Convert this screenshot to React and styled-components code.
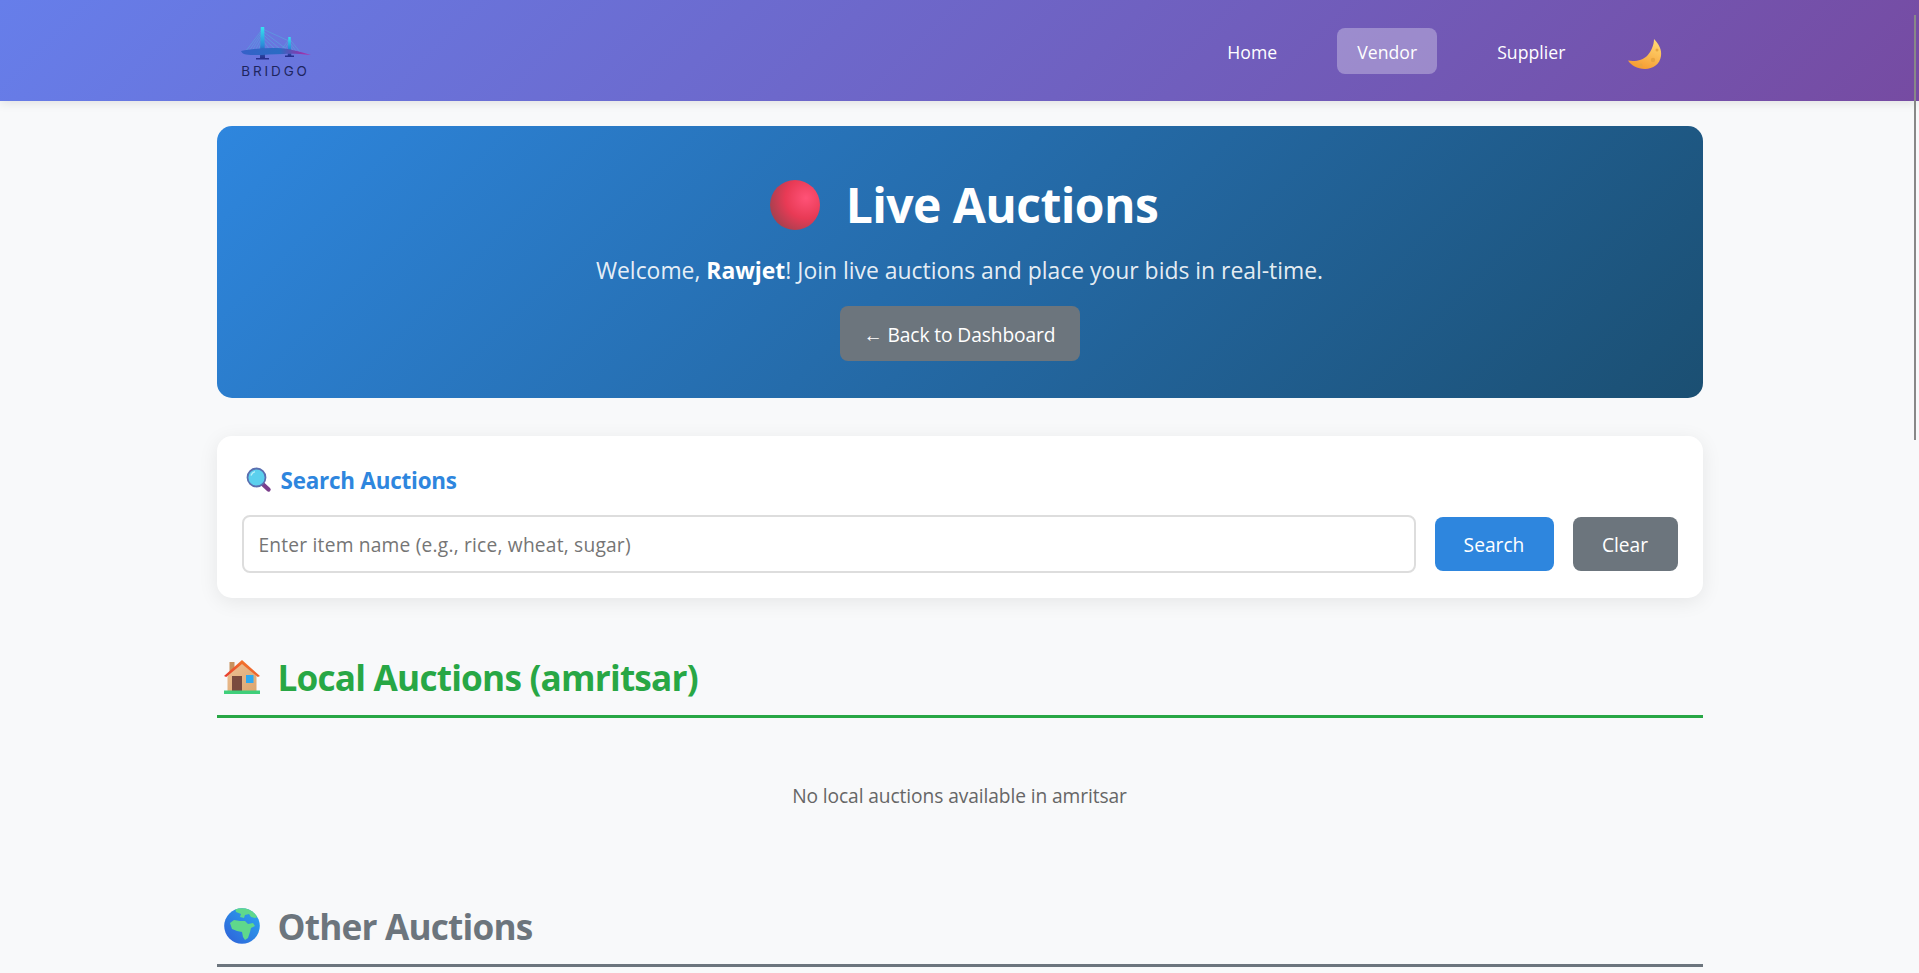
import styled, { createGlobalStyle } from "styled-components";

const GlobalStyle = createGlobalStyle`
  * { box-sizing: border-box; }
  html, body {
    margin: 0;
    height: 100%;
    overflow: hidden;
    background: #f8f9fa;
    font-family: "Open Sans", "Noto Sans", sans-serif;
  }
`;

const Header = styled.header`
  height: 101px;
  background: linear-gradient(135deg, #667eea 0%, #764ba2 100%);
  box-shadow: 0 2px 10px rgba(0, 0, 0, 0.1);
`;

const HeaderInner = styled.div`
  width: 1486px;
  height: 100%;
  margin: 0 auto;
  padding: 0 41px 0 23px;
  display: flex;
  align-items: center;
  justify-content: space-between;
`;

const Logo = styled.div`
  width: 72px;
  display: flex;
  flex-direction: column;
  align-items: center;
  padding-top: 3px;
`;

const LogoText = styled.span`
  margin-top: 1px;
  font-family: "Inter", sans-serif;
  font-size: 13.5px;
  line-height: 16px;
  letter-spacing: 2.9px;
  color: #1d2560;
  white-space: nowrap;
`;

const Nav = styled.nav`
  display: flex;
  align-items: center;
  gap: 40px;
`;

const NavLink = styled.a`
  height: 46px;
  padding: 2px 20px 0;
  display: flex;
  align-items: center;
  border-radius: 8px;
  font-size: 17.6px;
  letter-spacing: 0.05px;
  color: #fff;
  background: ${(p) => (p.$active ? "rgba(255, 255, 255, 0.3)" : "transparent")};
`;

const ThemeToggle = styled.button`
  width: 36px;
  height: 40px;
  padding: 4px 0 0;
  border: none;
  background: none;
  display: flex;
  align-items: center;
  justify-content: center;
`;

const Main = styled.main`
  width: 1486px;
  margin: 0 auto;
  padding-top: 25px;
`;

const Hero = styled.section`
  height: 272px;
  padding-top: 47px;
  border-radius: 15px;
  background: linear-gradient(135deg, #2e86de 0%, #1b4f72 100%);
  display: flex;
  flex-direction: column;
  align-items: center;
  color: #fff;
`;

const HeroTitle = styled.h1`
  margin: 0;
  height: 64px;
  padding-left: 8px;
  display: flex;
  align-items: center;
  gap: 25px;
  font-size: 48px;
  font-weight: 700;
  letter-spacing: -0.55px;
  line-height: 64px;
`;

const HeroText = styled.p`
  margin: 19px 0 0;
  font-size: 22.9px;
  line-height: 30px;
  color: rgba(255, 255, 255, 0.9);

  strong {
    color: #fff;
    font-weight: 700;
  }
`;

const BackButton = styled.a`
  margin-top: 20px;
  width: 240px;
  height: 55px;
  padding-top: 1px;
  display: flex;
  align-items: center;
  justify-content: center;
  border-radius: 8px;
  background: #6c757d;
  font-size: 19.2px;
  letter-spacing: -0.1px;
  color: #fff;
`;

const SearchCard = styled.section`
  margin-top: 38px;
  height: 162px;
  padding: 29px 25px 25px;
  border-radius: 15px;
  background: #fff;
  box-shadow: 0 4px 20px rgba(0, 0, 0, 0.08);
`;

const SearchTitle = styled.h3`
  margin: 0;
  height: 30px;
  padding-left: 4px;
  display: flex;
  align-items: center;
  gap: 9px;
  font-size: 22.4px;
  font-weight: 700;
  letter-spacing: -0.2px;
  color: #2e86de;
`;

const SearchRow = styled.div`
  margin-top: 20px;
  display: flex;
  align-items: center;
  gap: 19px;
`;

const SearchInput = styled.input`
  flex: 1;
  height: 58px;
  padding: 0 15px;
  border: 2px solid #ddd;
  border-radius: 8px;
  background: #fff;
  font-family: inherit;
  font-size: 19.2px;
  letter-spacing: 0.2px;
  outline: none;

  &::placeholder {
    color: #757575;
    opacity: 1;
  }
`;

const ActionButton = styled.button`
  width: ${(p) => p.$width}px;
  height: 54px;
  padding: 0;
  border: none;
  border-radius: 8px;
  background: ${(p) => p.$bg};
  font-family: inherit;
  font-size: 19.2px;
  color: #fff;
`;

const AuctionSection = styled.section`
  margin-top: ${(p) => p.$top}px;
`;

const SectionTitle = styled.h2`
  margin: 0;
  height: 64px;
  padding: 0 0 16px;
  display: flex;
  align-items: center;
  gap: 11px;
  border-bottom: 3px solid ${(p) => p.$color};
  font-size: 35.2px;
  font-weight: 700;
  letter-spacing: -0.8px;
  color: ${(p) => p.$color};
`;

const IconSlot = styled.span`
  width: 50px;
  display: flex;
  align-items: center;
  justify-content: center;
`;

const EmptyText = styled.p`
  margin: 65px 0 0;
  height: 26px;
  text-align: center;
  font-size: 19.2px;
  line-height: 26px;
  letter-spacing: -0.1px;
  color: #666;
`;

const Scrollbar = styled.div`
  position: fixed;
  top: 15px;
  right: 3px;
  width: 2px;
  height: 425px;
  background: #888;
`;

const BridgeLogo = () => (
  <svg width="72" height="36" viewBox="0 0 72 36" fill="none">
    <defs>
      <linearGradient id="deck" x1="0" y1="0" x2="1" y2="0">
        <stop offset="0" stopColor="#3560c8" />
        <stop offset="0.55" stopColor="#2a6cc4" />
        <stop offset="0.8" stopColor="#7a3fb0" />
        <stop offset="1" stopColor="#c02aa8" />
      </linearGradient>
      <linearGradient id="pylon" x1="0" y1="0" x2="0" y2="1">
        <stop offset="0" stopColor="#35e4f0" />
        <stop offset="0.6" stopColor="#2a8ad8" />
        <stop offset="1" stopColor="#27308f" />
      </linearGradient>
    </defs>
    <g stroke="#52c0e0" strokeWidth="0.5" opacity="0.8">
      <path d="M22.5 3 L6 25 M22.5 5 L9 25 M22.5 7 L12 25 M22.5 10 L15 25 M22.5 13 L18 25" />
      <path d="M22.5 3 L49 15 M22.5 5 L45 22 M22.5 8 L40 23 M22.5 11 L35 23 M22.5 14 L30 24" />
      <path d="M49.5 13 L42 23 M49.5 15 L45 23 M49.5 13 L60 26 M49.5 16 L56 25 M49.5 18 L53 25" />
    </g>
    <path d="M20.8 1 h3.4 l0.8 31 h-5 z" fill="url(#pylon)" />
    <path d="M48.3 11 h2.4 l0.6 19 h-3.6 z" fill="url(#pylon)" />
    <path d="M16 32 h13 v1.6 h-13 z M45 29.5 h9 v1.4 h-9 z" fill="#27308f" />
    <path d="M1 25 C16 22 38 21 50 23.5 C58 25 64 27 71 29 C60 28 52 27.5 44 28 C30 28 16 30 6 28.5 C3 28 1.5 26.5 1 25 Z" fill="url(#deck)" />
  </svg>
);

const MoonIcon = () => (
  <svg width="36" height="36" viewBox="0 0 36 36">
    <defs>
      <linearGradient id="moon" x1="0.7" y1="0" x2="0.3" y2="1">
        <stop offset="0" stopColor="#ffd873" />
        <stop offset="1" stopColor="#f59a2f" />
      </linearGradient>
    </defs>
    <path d="M28 4 C33 9 36 15 35 21 C34 29 27 34 19 34 C11 34 5 30 2 25.5 C9 27 17 25 21 21 C25 17 28 10 28 4 Z" fill="url(#moon)" />
    <circle cx="31" cy="15" r="1.5" fill="#e8a540" />
    <circle cx="27" cy="25" r="2.2" fill="#e8a540" />
    <circle cx="15" cy="30" r="1.6" fill="#e8a540" />
  </svg>
);

const RedBall = () => (
  <svg width="52" height="52" viewBox="0 0 52 52">
    <defs>
      <radialGradient id="ball" cx="0.72" cy="0.36" r="0.75">
        <stop offset="0" stopColor="#ff5277" />
        <stop offset="0.55" stopColor="#e83a55" />
        <stop offset="1" stopColor="#a8404f" />
      </radialGradient>
    </defs>
    <circle cx="26" cy="26" r="25" fill="url(#ball)" />
  </svg>
);

const Magnifier = () => (
  <svg width="26" height="26" viewBox="0 0 26 26">
    <path d="M15.5 16 L22.5 22.5" stroke="#7b3f8c" strokeWidth="4.4" strokeLinecap="round" />
    <circle cx="10.5" cy="10.5" r="9" fill="#5bd0ee" stroke="#5a6fb0" strokeWidth="1.8" />
    <path d="M5 8.5 A6 6 0 0 1 9 4.6" stroke="#b5eef9" strokeWidth="1.4" fill="none" />
  </svg>
);

const HouseIcon = () => (
  <svg width="36" height="34" viewBox="0 0 36 34">
    <defs>
      <linearGradient id="wall" x1="0" y1="0" x2="1" y2="1">
        <stop offset="0" stopColor="#edc094" />
        <stop offset="1" stopColor="#dca66f" />
      </linearGradient>
      <linearGradient id="roof" x1="0" y1="1" x2="1" y2="0">
        <stop offset="0" stopColor="#e8382f" />
        <stop offset="1" stopColor="#f58a2a" />
      </linearGradient>
    </defs>
    <rect x="5.5" y="2" width="5" height="12" fill="#c8925e" />
    <path d="M3.5 14 L18 3 L32.5 14 V31 H3.5 Z" fill="url(#wall)" />
    <path d="M0 16 L18 0 L36 16 L33.8 17 L18 4 L2.2 17 Z" fill="url(#roof)" />
    <rect x="8" y="16" width="10" height="15" fill="#7a4a3e" />
    <rect x="22" y="15" width="7.5" height="8" fill="#2ea8ee" />
    <rect x="0" y="30.5" width="36" height="3.5" fill="#3fcf7a" />
  </svg>
);

const GlobeIcon = () => (
  <svg width="36" height="36" viewBox="0 0 36 36">
    <defs>
      <linearGradient id="sea" x1="0" y1="1" x2="1" y2="0">
        <stop offset="0" stopColor="#2f5fd8" />
        <stop offset="1" stopColor="#2aa8f0" />
      </linearGradient>
      <clipPath id="earth">
        <circle cx="18" cy="18" r="17.8" />
      </clipPath>
    </defs>
    <circle cx="18" cy="18" r="17.8" fill="url(#sea)" />
    <g clipPath="url(#earth)" fill="#5fd88c">
      <path d="M11 0 H28 L36 8 L31 10 L27 9 L25 6 L21 7 L20 10 L16 9 L17 6 L12 4 Z" />
      <path d="M6 15 L10 12 L16 13 L21 13 L24 16 L29 15 L31 18 L27 20 L26 24 L24 30 L21 32 L19 29 L18 24 L13 23 L8 21 Z" />
    </g>
  </svg>
);

const App = () => {
  return (
    <>
      <GlobalStyle />
      <Header>
        <HeaderInner>
          <Logo>
            <BridgeLogo />
            <LogoText>BRIDGO</LogoText>
          </Logo>
          <Nav>
            <NavLink>Home</NavLink>
            <NavLink $active>Vendor</NavLink>
            <NavLink>Supplier</NavLink>
            <ThemeToggle aria-label="Toggle theme">
              <MoonIcon />
            </ThemeToggle>
          </Nav>
        </HeaderInner>
      </Header>
      <Main>
        <Hero>
          <HeroTitle>
            <RedBall />
            Live Auctions
          </HeroTitle>
          <HeroText>
            Welcome, <strong>Rawjet</strong>! Join live auctions and place your bids in real-time.
          </HeroText>
          <BackButton>← Back to Dashboard</BackButton>
        </Hero>
        <SearchCard>
          <SearchTitle>
            <Magnifier />
            Search Auctions
          </SearchTitle>
          <SearchRow>
            <SearchInput placeholder="Enter item name (e.g., rice, wheat, sugar)" />
            <ActionButton $bg="#2e86de" $width={119}>Search</ActionButton>
            <ActionButton $bg="#6c757d" $width={105}>Clear</ActionButton>
          </SearchRow>
        </SearchCard>
        <AuctionSection $top={56}>
          <SectionTitle $color="#28a745">
            <IconSlot><HouseIcon /></IconSlot>
            Local Auctions (amritsar)
          </SectionTitle>
          <EmptyText>No local auctions available in amritsar</EmptyText>
        </AuctionSection>
        <AuctionSection $top={94}>
          <SectionTitle $color="#6c757d">
            <IconSlot><GlobeIcon /></IconSlot>
            Other Auctions
          </SectionTitle>
        </AuctionSection>
      </Main>
      <Scrollbar />
    </>
  );
};

export default App;
